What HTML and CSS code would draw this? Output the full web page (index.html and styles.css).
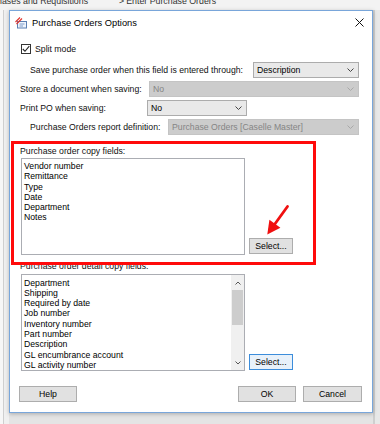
FILE: index.html
```html
<!DOCTYPE html>
<html lang="en">
<head>
  <meta charset="UTF-8" />
  <title>Purchase Orders Options</title>
  <link rel="stylesheet" href="styles.css">
</head>
<body>
  <div class="crumb">
    <div class="crumb-inner">
      <span class="path">Purchases and Requisitions</span>
      <span class="sep">&gt;</span>
      <span class="page">Enter Purchase Orders</span>
    </div>
  </div>

  <div class="desk">
    <div class="app-left"></div>

    <div class="dialog">
      <div class="titlebar">
        <svg class="app-icon" width="12" height="12" viewBox="0 0 12 12">
          <rect x="2.5" y="4.5" width="9" height="6.5" fill="#eef3fb" stroke="#5b7fb3" />
          <line x1="4.5" y1="7" x2="9.5" y2="7" stroke="#7d9ccc" />
          <line x1="4.5" y1="9" x2="8" y2="9" stroke="#7d9ccc" />
          <line x1="0.5" y1="5" x2="5" y2="0.5" stroke="#e0302a" stroke-width="1.1" />
          <line x1="1.5" y1="7" x2="7" y2="1.5" stroke="#e0302a" stroke-width="1.1" />
        </svg>
        <span class="title">Purchase Orders Options</span>
        <svg class="close" width="9" height="9" viewBox="0 0 9 9">
          <path d="M0.5 0.5 L8.5 8.5 M8.5 0.5 L0.5 8.5" stroke="#111" stroke-width="1" />
        </svg>
      </div>

      <div class="content">
        <div class="check-row">
          <span class="checkbox">
            <svg width="8" height="8" viewBox="0 0 8 8">
              <polyline points="0.8,4 3,6.3 7.3,1.2" fill="none" stroke="#222" stroke-width="1.1" />
            </svg>
          </span>
          <span>Split mode</span>
        </div>

        <div class="row first indent">
          <span>Save purchase order when this field is entered through:</span>
          <div class="combo w-desc">
            <span class="val">Description</span>
            <svg class="chev" width="7" height="4" viewBox="0 0 7 4"><polyline points="0.5,0.5 3.5,3.5 6.5,0.5" fill="none" stroke="#444" /></svg>
          </div>
        </div>

        <div class="row">
          <span>Store a document when saving:</span>
          <div class="combo disabled w-store">
            <span class="val">No</span>
            <svg class="chev" width="7" height="4" viewBox="0 0 7 4"><polyline points="0.5,0.5 3.5,3.5 6.5,0.5" fill="none" stroke="#a8a8a8" /></svg>
          </div>
        </div>

        <div class="row">
          <span class="lbl-print">Print PO when saving:</span>
          <div class="combo w-print">
            <span class="val">No</span>
            <svg class="chev" width="7" height="4" viewBox="0 0 7 4"><polyline points="0.5,0.5 3.5,3.5 6.5,0.5" fill="none" stroke="#444" /></svg>
          </div>
        </div>

        <div class="row indent">
          <span>Purchase Orders report definition:</span>
          <div class="combo disabled w-report">
            <span class="val">Purchase Orders [Caselle Master]</span>
            <svg class="chev" width="7" height="4" viewBox="0 0 7 4"><polyline points="0.5,0.5 3.5,3.5 6.5,0.5" fill="none" stroke="#a8a8a8" /></svg>
          </div>
        </div>

        <div class="field-label">Purchase order copy fields:</div>
        <div class="list-row">
          <div class="listbox">
            <div class="items">
              <div>Vendor number</div>
              <div>Remittance</div>
              <div>Type</div>
              <div>Date</div>
              <div>Department</div>
              <div>Notes</div>
            </div>
          </div>
          <button class="btn btn-select">Select...</button>
        </div>

        <div class="field-label second">Purchase order detail copy fields:</div>
        <div class="list-row second">
          <div class="listbox">
            <div class="items">
              <div>Department</div>
              <div>Shipping</div>
              <div>Required by date</div>
              <div>Job number</div>
              <div>Inventory number</div>
              <div>Part number</div>
              <div>Description</div>
              <div>GL encumbrance account</div>
              <div>GL activity number</div>
            </div>
            <div class="scrollbar">
              <div class="sb-btn">
                <svg width="6" height="4" viewBox="0 0 6 4"><polyline points="0.5,3.5 3,1 5.5,3.5" fill="none" stroke="#555" /></svg>
              </div>
              <div class="sb-thumb"></div>
              <div class="sb-track"></div>
              <div class="sb-btn">
                <svg width="6" height="4" viewBox="0 0 6 4"><polyline points="0.5,0.5 3,3 5.5,0.5" fill="none" stroke="#555" /></svg>
              </div>
            </div>
          </div>
          <button class="btn btn-select focused">Select...</button>
        </div>

        <div class="footer">
          <button class="btn btn-help">Help</button>
          <button class="btn btn-ok">OK</button>
          <button class="btn btn-cancel">Cancel</button>
        </div>
      </div>

      <!-- annotation drawn over the dialog -->
      <div class="highlight"></div>
      <svg class="arrow" width="30" height="35" viewBox="0 0 30 35">
        <line x1="25.5" y1="2.5" x2="12.5" y2="20.5" stroke="#f01010" stroke-width="2.8" stroke-linecap="round" />
        <polygon points="5.3,30.5 7.4,15.8 18.4,23.8" fill="#f01010" />
      </svg>
    </div>

    <div class="app-right"></div>
  </div>
</body>
</html>
```

FILE: styles.css
```css
* {
  box-sizing: border-box;
}
body {
  margin: 0;
  width: 380px;
  height: 424px;
  overflow: hidden;
  background: #e4e4e4;
  font-family: "Liberation Sans", Arial, sans-serif;
  font-size: 8.7px;
  color: #111;
}

/* strip of the main window behind the dialog */
.crumb {
  height: 10px;
  overflow: hidden;
  white-space: nowrap;
  background: #f3f3f3;
  color: #333;
  font-size: 8.8px;
}
.crumb-inner {
  display: flex;
  margin-top: -4px;
  line-height: 10px;
}
.crumb .path {
  margin-left: -21px;
}
.crumb .sep {
  margin-left: 31px;
}
.crumb .page {
  margin-left: 2px;
}

.desk {
  display: flex;
  height: 414px;
}
.app-left {
  width: 9px;
  background: #f0f0f0;
  border-left: 3px solid #f7f7f7;
  box-shadow: inset 1px 0 0 #cfcfcf;
}
.app-right {
  flex: 1;
  background: #e8e8e8;
  border-left: 2px solid #cfcfcf;
}

.dialog {
  position: relative;
  width: 364px;
  height: 403px;
  border: 1px solid #79a6da;
  background: #fff;
  box-shadow: 0 1px 4px rgba(0,0,0,0.25);
}

.titlebar {
  display: flex;
  align-items: center;
  height: 23px;
  padding-left: 5px;
}
.app-icon {
  margin-right: 5px;
}
.title {
  font-size: 9.3px;
  color: #000;
}
.close {
  margin-left: auto;
  margin-right: 8px;
}

.content {
  padding: 0 13px 0 10px;
}

.check-row {
  display: flex;
  align-items: center;
  height: 12px;
  margin-top: 9px;
}
.checkbox {
  display: flex;
  align-items: center;
  justify-content: center;
  width: 10px;
  height: 10px;
  margin-left: 1px;
  margin-right: 4px;
  border: 1px solid #333;
  background: #fff;
}

.row {
  display: flex;
  align-items: center;
  height: 16px;
  margin-top: 3px;
}
.row.first {
  margin-top: 7px;
}
.indent {
  padding-left: 10px;
}
.lbl-print {
  width: 127px;
}

.combo {
  display: flex;
  align-items: center;
  height: 16px;
  margin-left: auto;
  padding: 0 4px 0 3px;
  border: 1px solid #acacac;
  background: #e9e9e9;
  color: #000;
}
.combo .val {
  flex: 1;
  white-space: nowrap;
  overflow: hidden;
}
.combo.disabled {
  background: #cccccc;
  border-color: #c4c4c4;
  color: #858585;
}
.w-desc {
  width: 106px;
}
.w-store {
  width: 210px;
}
.w-print {
  width: 100px;
  margin-left: 0;
}
.w-report {
  width: 191px;
}

.field-label {
  height: 10px;
  line-height: 10px;
  margin-top: 11px;
}
.field-label.second {
  margin-top: 6px;
}

.list-row {
  display: flex;
  align-items: flex-end;
  margin-top: 2px;
}
.list-row.second {
  margin-top: 3px;
}
.listbox {
  display: flex;
  width: 224px;
  height: 97px;
  margin-left: 1px;
  border: 1px solid #abadb3;
  background: #fff;
}
.items {
  flex: 1;
  padding: 2px 0 0 2px;
  line-height: 10.3px;
  color: #000;
}
.list-row.second .items {
  padding-top: 2.5px;
}

.scrollbar {
  display: flex;
  flex-direction: column;
  width: 13px;
  background: #f0f0f0;
}
.sb-btn {
  display: flex;
  align-items: center;
  justify-content: center;
  height: 15px;
}
.sb-thumb {
  height: 35px;
  margin: 0 1px;
  background: #cdcdcd;
}
.sb-track {
  flex: 1;
}

.btn {
  height: 16px;
  padding: 0;
  border: 1px solid #adadad;
  background: #e1e1e1;
  font-family: inherit;
  font-size: 8.7px;
  color: #000;
}
.btn-select {
  width: 44px;
  margin-left: 4px;
  margin-bottom: 1px;
}
.btn-select.focused {
  border-color: #3c8ddb;
  background: #e8f1fa;
}

.footer {
  display: flex;
  margin: 15px -3px 0 -1px;
}
.btn-help {
  width: 58px;
}
.btn-ok {
  width: 58px;
  margin-left: auto;
}
.btn-cancel {
  width: 59px;
  margin-left: 7px;
}

.highlight {
  position: absolute;
  left: 1px;
  top: 130px;
  width: 305px;
  height: 124px;
  border: 3px solid #ff0a0a;
}
.arrow {
  position: absolute;
  left: 252px;
  top: 193px;
}
```
